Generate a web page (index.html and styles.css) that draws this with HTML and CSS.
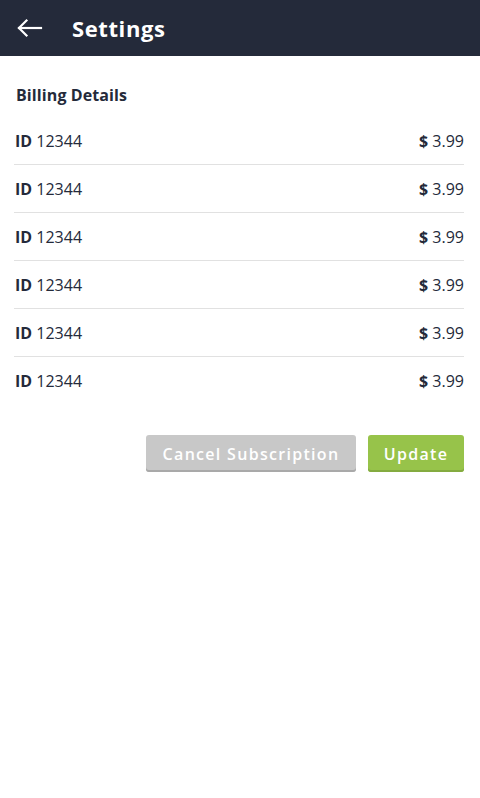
FILE: index.html
```html
<!DOCTYPE html>
<html lang="en">
<head>
<meta charset="utf-8">
<title>Settings</title>
<link rel="stylesheet" href="styles.css">
</head>
<body>
<header class="topbar">
  <button class="back" aria-label="Back">
    <svg width="26" height="20" viewBox="0 0 26 20" fill="none" stroke="#ffffff" stroke-width="2.2" stroke-linecap="square">
      <path d="M2 10 H24"/>
      <path d="M9.5 2.5 L2 10 L9.5 17.5"/>
    </svg>
  </button>
  <h1 class="title">Settings</h1>
</header>
<main class="content">
  <h2 class="section-title">Billing Details</h2>
  <ul class="rows">
    <li class="row"><span class="id"><b>ID</b> 12344</span><span class="price"><b>$</b> 3.99</span></li>
    <li class="row"><span class="id"><b>ID</b> 12344</span><span class="price"><b>$</b> 3.99</span></li>
    <li class="row"><span class="id"><b>ID</b> 12344</span><span class="price"><b>$</b> 3.99</span></li>
    <li class="row"><span class="id"><b>ID</b> 12344</span><span class="price"><b>$</b> 3.99</span></li>
    <li class="row"><span class="id"><b>ID</b> 12344</span><span class="price"><b>$</b> 3.99</span></li>
    <li class="row"><span class="id"><b>ID</b> 12344</span><span class="price"><b>$</b> 3.99</span></li>
  </ul>
  <div class="actions">
    <button class="btn btn-cancel">Cancel Subscription</button>
    <button class="btn btn-update">Update</button>
  </div>
</main>
</body>
</html>
```
FILE: styles.css
```css
* { box-sizing: border-box; }
html, body { margin: 0; padding: 0; background: #ffffff; }
body {
  font-family: "Open Sans", "DejaVu Sans", sans-serif;
  color: #242a3a;
}
.topbar {
  height: 56px;
  background: #242a3a;
  display: flex;
  align-items: center;
  padding-left: 17px;
}
.back {
  background: none;
  border: 0;
  padding: 0;
  width: 26px;
  height: 20px;
  display: flex;
  margin-top: -1px;
}
.title {
  margin: 0 0 0 29px;
  color: #ffffff;
  font-size: 22px;
  font-weight: 700;
  letter-spacing: 0.6px;
}
.content {
  padding: 0 16px 0 14px;
}
.section-title {
  margin: 0;
  padding: 28px 0 0 2px;
  height: 61px;
  font-size: 16px;
  font-weight: 700;
  line-height: 22px;
  letter-spacing: 0.1px;
}
.rows {
  list-style: none;
  margin: 0;
  padding: 0;
}
.row {
  height: 48px;
  display: flex;
  align-items: center;
  justify-content: space-between;
  border-bottom: 1px solid #e1e1e1;
  font-size: 16px;
  padding: 0 0 0 1px;
}
.row:last-child { border-bottom: 0; }
.id b, .price b { font-weight: 700; }
.id, .price { font-weight: 400; }
.actions {
  display: flex;
  justify-content: flex-end;
  gap: 12px;
  padding-top: 30px;
}
.btn {
  height: 37px;
  border: 0;
  border-radius: 3px;
  color: #ffffff;
  font-family: inherit;
  font-size: 16px;
  font-weight: 600;
  letter-spacing: 1.3px;
  padding: 0 10px;
}
.btn-cancel {
  width: 210px;
  background: #c8c8c8;
  box-shadow: inset 0 -2px 0 #a9a9a9;
}
.btn-update {
  width: 96px;
  background: #97c34a;
  box-shadow: inset 0 -2px 0 #84ab40;
}
```
